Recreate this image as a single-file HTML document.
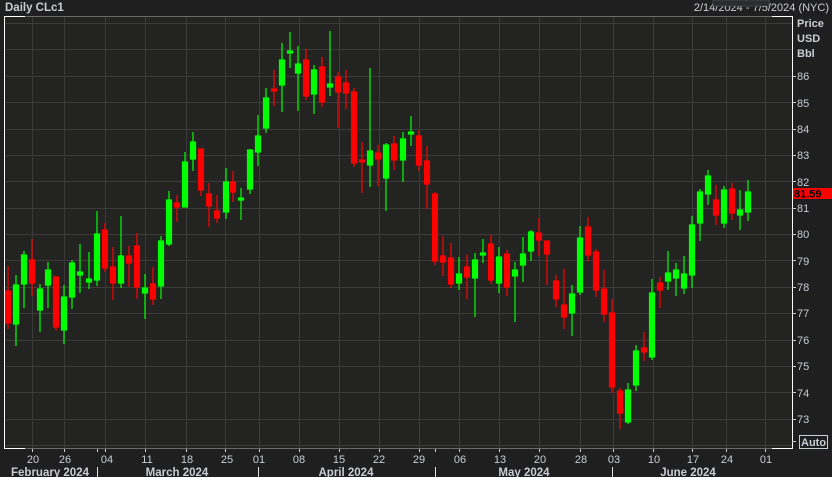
<!DOCTYPE html>
<html><head><meta charset="utf-8"><style>
html,body{margin:0;padding:0;background:#1f1f1f;}
svg{display:block;font-family:"Liberation Sans",sans-serif;}
</style></head><body>
<svg width="832" height="477" viewBox="0 0 832 477" xmlns="http://www.w3.org/2000/svg">
<rect width="832" height="477" fill="#1f1f1f"/>
<rect x="4" y="16" width="788" height="432" fill="#232422"/>
<g stroke="#3b3c39" stroke-width="1">
<path d="M4 23.5H792M4 49.5H792M4 76.5H792M4 102.5H792M4 129.5H792M4 155.5H792M4 181.5H792M4 208.5H792M4 234.5H792M4 260.5H792M4 287.5H792M4 313.5H792M4 340.5H792M4 366.5H792M4 392.5H792M4 419.5H792M4 445.5H792"/>
<path d="M32.5 16V448M64.5 16V448M105.5 16V448M145.5 16V448M186.5 16V448M225.5 16V448M259.5 16V448M299.5 16V448M339.5 16V448M379.5 16V448M419.5 16V448M459.5 16V448M499.5 16V448M539.5 16V448M580.5 16V448M613.5 16V448M653.5 16V448M692.5 16V448M726.5 16V448M765.5 16V448"/>
</g>
<path d="M4 16.5H792M4 448.5H792" stroke="#6a6a6a"/>
<path d="M25 16.5H4.5V448.5H25M772 16.5H792.5V448.5H772" stroke="#fff" fill="none"/>
<g stroke="#ff0000" fill="#ff0000" stroke-width="1.2">
<line x1="8" y1="266" x2="8" y2="329"/><rect x="5.5" y="291" width="5" height="32"/>
<line x1="32" y1="239" x2="32" y2="296"/><rect x="29.5" y="260" width="5" height="23"/>
<line x1="56" y1="276" x2="56" y2="331"/><rect x="53.5" y="277" width="5" height="50"/>
<line x1="105" y1="223" x2="105" y2="272"/><rect x="102.5" y="230" width="5" height="38"/>
<line x1="113" y1="247" x2="113" y2="300"/><rect x="110.5" y="267" width="5" height="16"/>
<line x1="129" y1="246" x2="129" y2="287"/><rect x="126.5" y="256" width="5" height="7"/>
<line x1="137" y1="233" x2="137" y2="299"/><rect x="134.5" y="246" width="5" height="41"/>
<line x1="153" y1="267" x2="153" y2="305"/><rect x="150.5" y="284" width="5" height="15"/>
<line x1="177" y1="195" x2="177" y2="222"/><rect x="174.5" y="203" width="5" height="4"/>
<line x1="201" y1="149" x2="201" y2="196"/><rect x="198.5" y="149" width="5" height="41"/>
<line x1="209" y1="183" x2="209" y2="227"/><rect x="206.5" y="194" width="5" height="12"/>
<line x1="217" y1="195" x2="217" y2="223"/><rect x="214.5" y="211" width="5" height="7"/>
<line x1="233" y1="171" x2="233" y2="202"/><rect x="230.5" y="182" width="5" height="10"/>
<line x1="274" y1="70" x2="274" y2="106"/><rect x="271.5" y="89" width="5" height="2"/>
<line x1="306" y1="49" x2="306" y2="100"/><rect x="303.5" y="60" width="5" height="36"/>
<line x1="322" y1="57" x2="322" y2="107"/><rect x="319.5" y="67" width="5" height="35"/>
<line x1="338" y1="72" x2="338" y2="128"/><rect x="335.5" y="77" width="5" height="15"/>
<line x1="346" y1="70" x2="346" y2="109"/><rect x="343.5" y="83" width="5" height="10"/>
<line x1="354" y1="88" x2="354" y2="167"/><rect x="351.5" y="92" width="5" height="71"/>
<line x1="362" y1="142" x2="362" y2="193"/><rect x="359.5" y="160" width="5" height="2"/>
<line x1="378" y1="145" x2="378" y2="186"/><rect x="375.5" y="153" width="5" height="6"/>
<line x1="394" y1="136" x2="394" y2="170"/><rect x="391.5" y="144" width="5" height="16"/>
<line x1="419" y1="130" x2="419" y2="171"/><rect x="416.5" y="136" width="5" height="29"/>
<line x1="427" y1="146" x2="427" y2="209"/><rect x="424.5" y="161" width="5" height="23"/>
<line x1="435" y1="192" x2="435" y2="265"/><rect x="432.5" y="194" width="5" height="67"/>
<line x1="443" y1="236" x2="443" y2="276"/><rect x="440.5" y="256" width="5" height="6"/>
<line x1="451" y1="243" x2="451" y2="288"/><rect x="448.5" y="258" width="5" height="26"/>
<line x1="467" y1="255" x2="467" y2="299"/><rect x="464.5" y="267" width="5" height="10"/>
<line x1="491" y1="235" x2="491" y2="284"/><rect x="488.5" y="244" width="5" height="36"/>
<line x1="507" y1="250" x2="507" y2="296"/><rect x="504.5" y="254" width="5" height="33"/>
<line x1="539" y1="218" x2="539" y2="256"/><rect x="536.5" y="233" width="5" height="7"/>
<line x1="547" y1="241" x2="547" y2="285"/><rect x="544.5" y="241" width="5" height="13"/>
<line x1="556" y1="275" x2="556" y2="307"/><rect x="553.5" y="281" width="5" height="18"/>
<line x1="564" y1="269" x2="564" y2="329"/><rect x="561.5" y="305" width="5" height="12"/>
<line x1="588" y1="217" x2="588" y2="261"/><rect x="585.5" y="227" width="5" height="28"/>
<line x1="596" y1="249" x2="596" y2="297"/><rect x="593.5" y="252" width="5" height="38"/>
<line x1="604" y1="270" x2="604" y2="322"/><rect x="601.5" y="289" width="5" height="25"/>
<line x1="612" y1="299" x2="612" y2="393"/><rect x="609.5" y="313" width="5" height="74"/>
<line x1="620" y1="388" x2="620" y2="429"/><rect x="617.5" y="391" width="5" height="22"/>
<line x1="644" y1="332" x2="644" y2="361"/><rect x="641.5" y="348" width="5" height="4"/>
<line x1="660" y1="277" x2="660" y2="308"/><rect x="657.5" y="283" width="5" height="7"/>
<line x1="716" y1="185" x2="716" y2="225"/><rect x="713.5" y="200" width="5" height="15"/>
<line x1="732" y1="183" x2="732" y2="220"/><rect x="729.5" y="189" width="5" height="24"/>
</g>
<g stroke="#00ff00" fill="#00ff00" stroke-width="1.2">
<line x1="16" y1="275" x2="16" y2="346"/><rect x="13.5" y="285" width="5" height="39"/>
<line x1="24" y1="251" x2="24" y2="308"/><rect x="21.5" y="255" width="5" height="29"/>
<line x1="40" y1="284" x2="40" y2="332"/><rect x="37.5" y="289" width="5" height="21"/>
<line x1="48" y1="262" x2="48" y2="308"/><rect x="45.5" y="270" width="5" height="15"/>
<line x1="64" y1="285" x2="64" y2="344"/><rect x="61.5" y="297" width="5" height="33"/>
<line x1="72" y1="260" x2="72" y2="309"/><rect x="69.5" y="263" width="5" height="34"/>
<line x1="80" y1="244" x2="80" y2="293"/><rect x="77.5" y="272" width="5" height="3"/>
<line x1="89" y1="252" x2="89" y2="289"/><rect x="86.5" y="279" width="5" height="3"/>
<line x1="97" y1="211" x2="97" y2="286"/><rect x="94.5" y="234" width="5" height="46"/>
<line x1="121" y1="216" x2="121" y2="288"/><rect x="118.5" y="256" width="5" height="27"/>
<line x1="145" y1="274" x2="145" y2="319"/><rect x="142.5" y="288" width="5" height="5"/>
<line x1="161" y1="236" x2="161" y2="299"/><rect x="158.5" y="241" width="5" height="45"/>
<line x1="169" y1="191" x2="169" y2="246"/><rect x="166.5" y="200" width="5" height="44"/>
<line x1="185" y1="152" x2="185" y2="207"/><rect x="182.5" y="162" width="5" height="45"/>
<line x1="193" y1="132" x2="193" y2="171"/><rect x="190.5" y="142" width="5" height="17"/>
<line x1="226" y1="168" x2="226" y2="219"/><rect x="223.5" y="182" width="5" height="30"/>
<line x1="241" y1="188" x2="241" y2="220"/><rect x="238.5" y="198" width="5" height="2"/>
<line x1="250" y1="149" x2="250" y2="194"/><rect x="247.5" y="150" width="5" height="39"/>
<line x1="258" y1="115" x2="258" y2="166"/><rect x="255.5" y="136" width="5" height="16"/>
<line x1="266" y1="88" x2="266" y2="133"/><rect x="263.5" y="98" width="5" height="30"/>
<line x1="282" y1="43" x2="282" y2="112"/><rect x="279.5" y="60" width="5" height="25"/>
<line x1="290" y1="32" x2="290" y2="68"/><rect x="287.5" y="51" width="5" height="2"/>
<line x1="298" y1="46" x2="298" y2="111"/><rect x="295.5" y="64" width="5" height="9"/>
<line x1="314" y1="65" x2="314" y2="114"/><rect x="311.5" y="70" width="5" height="24"/>
<line x1="330" y1="31" x2="330" y2="96"/><rect x="327.5" y="84" width="5" height="3"/>
<line x1="370" y1="68" x2="370" y2="187"/><rect x="367.5" y="151" width="5" height="14"/>
<line x1="386" y1="143" x2="386" y2="211"/><rect x="383.5" y="145" width="5" height="33"/>
<line x1="403" y1="132" x2="403" y2="182"/><rect x="400.5" y="139" width="5" height="21"/>
<line x1="411" y1="116" x2="411" y2="146"/><rect x="408.5" y="132" width="5" height="2"/>
<line x1="459" y1="257" x2="459" y2="290"/><rect x="456.5" y="274" width="5" height="9"/>
<line x1="475" y1="253" x2="475" y2="317"/><rect x="472.5" y="260" width="5" height="18"/>
<line x1="483" y1="239" x2="483" y2="263"/><rect x="480.5" y="253" width="5" height="2"/>
<line x1="499" y1="247" x2="499" y2="293"/><rect x="496.5" y="257" width="5" height="26"/>
<line x1="515" y1="262" x2="515" y2="322"/><rect x="512.5" y="270" width="5" height="6"/>
<line x1="523" y1="237" x2="523" y2="282"/><rect x="520.5" y="254" width="5" height="11"/>
<line x1="531" y1="230" x2="531" y2="261"/><rect x="528.5" y="232" width="5" height="19"/>
<line x1="572" y1="285" x2="572" y2="336"/><rect x="569.5" y="294" width="5" height="19"/>
<line x1="580" y1="226" x2="580" y2="295"/><rect x="577.5" y="238" width="5" height="54"/>
<line x1="628" y1="383" x2="628" y2="424"/><rect x="625.5" y="390" width="5" height="32"/>
<line x1="636" y1="345" x2="636" y2="391"/><rect x="633.5" y="351" width="5" height="34"/>
<line x1="652" y1="279" x2="652" y2="360"/><rect x="649.5" y="293" width="5" height="64"/>
<line x1="668" y1="251" x2="668" y2="290"/><rect x="665.5" y="273" width="5" height="8"/>
<line x1="676" y1="263" x2="676" y2="296"/><rect x="673.5" y="270" width="5" height="8"/>
<line x1="684" y1="256" x2="684" y2="294"/><rect x="681.5" y="274" width="5" height="14"/>
<line x1="692" y1="216" x2="692" y2="288"/><rect x="689.5" y="225" width="5" height="50"/>
<line x1="700" y1="189" x2="700" y2="241"/><rect x="697.5" y="192" width="5" height="31"/>
<line x1="708" y1="170" x2="708" y2="205"/><rect x="705.5" y="176" width="5" height="18"/>
<line x1="724" y1="186" x2="724" y2="228"/><rect x="721.5" y="190" width="5" height="33"/>
<line x1="740" y1="190" x2="740" y2="230"/><rect x="737.5" y="210" width="5" height="5"/>
<line x1="748" y1="180" x2="748" y2="221"/><rect x="745.5" y="192" width="5" height="20"/>
</g>
<!-- title -->
<text x="5" y="11" font-size="11.5" font-weight="bold" fill="#c9cdd4">Daily CLc1</text>
<text x="829" y="11" font-size="11" fill="#c9cdd4" text-anchor="end">2/14/2024 - 7/5/2024 (NYC)</text>
<rect x="713" y="0" width="56" height="6" fill="#2a2c30" stroke="#555" stroke-width="0.6"/>
<!-- y axis -->
<g font-size="11" fill="#c9cdd4">
<text x="797" y="27" font-weight="bold">Price</text>
<text x="797" y="42" font-weight="bold">USD</text>
<text x="797" y="57" font-weight="bold">Bbl</text>
</g>
<g stroke="#c9cdd4"><path d="M792 76.5H796M792 102.5H796M792 129.5H796M792 155.5H796M792 181.5H796M792 208.5H796M792 234.5H796M792 260.5H796M792 287.5H796M792 313.5H796M792 340.5H796M792 366.5H796M792 392.5H796M792 419.5H796M792 441.5H796"/></g>
<g font-size="11" fill="#c9cdd4">
<text x="797" y="80">86</text><text x="797" y="107">85</text><text x="797" y="133">84</text><text x="797" y="159">83</text><text x="797" y="186">82</text><text x="797" y="212">81</text><text x="797" y="238">80</text><text x="797" y="265">79</text><text x="797" y="291">78</text><text x="797" y="317">77</text><text x="797" y="344">76</text><text x="797" y="370">75</text><text x="797" y="397">74</text><text x="797" y="423">73</text>
</g>
<rect x="793" y="188" width="39" height="11" fill="#ff0000"/>
<text x="794" y="197.5" font-size="11" font-weight="bold" fill="#000">81.59</text>
<rect x="799.5" y="435.5" width="28" height="13" fill="none" stroke="#c9cdd4"/>
<text x="801" y="446" font-size="11" font-weight="bold" fill="#c9cdd4">Auto</text>
<!-- x axis -->
<g stroke="#c9cdd4"><path d="M32.5 449V452M64.5 449V452M97.5 449V452M105.5 449V452M145.5 449V452M186.5 449V452M225.5 449V452M259.5 449V452M299.5 449V452M339.5 449V452M379.5 449V452M419.5 449V452M435.5 449V452M459.5 449V452M499.5 449V452M539.5 449V452M580.5 449V452M613.5 449V452M653.5 449V452M692.5 449V452M726.5 449V452M765.5 449V452"/>
<path d="M97.5 467V477M258.5 467V477M435.5 467V477M612.5 467V477" stroke="#e0e0e0"/></g>
<g font-size="11" fill="#c9cdd4" text-anchor="middle">
<text x="33" y="463">20</text><text x="65" y="463">26</text><text x="107" y="463">04</text><text x="147" y="463">11</text><text x="187" y="463">18</text><text x="227" y="463">25</text><text x="259" y="463">01</text><text x="299" y="463">08</text><text x="339" y="463">15</text><text x="379" y="463">22</text><text x="419" y="463">29</text><text x="460" y="463">06</text><text x="500" y="463">13</text><text x="540" y="463">20</text><text x="581" y="463">28</text><text x="614" y="463">03</text><text x="654" y="463">10</text><text x="693" y="463">17</text><text x="727" y="463">24</text><text x="766" y="463">01</text>
</g>
<g font-size="11.5" font-weight="bold" fill="#c9cdd4" text-anchor="middle">
<text x="50" y="476">February 2024</text><text x="177" y="476">March 2024</text><text x="346" y="476">April 2024</text><text x="524" y="476">May 2024</text><text x="688" y="476">June 2024</text>
</g>
</svg>
</body></html>
